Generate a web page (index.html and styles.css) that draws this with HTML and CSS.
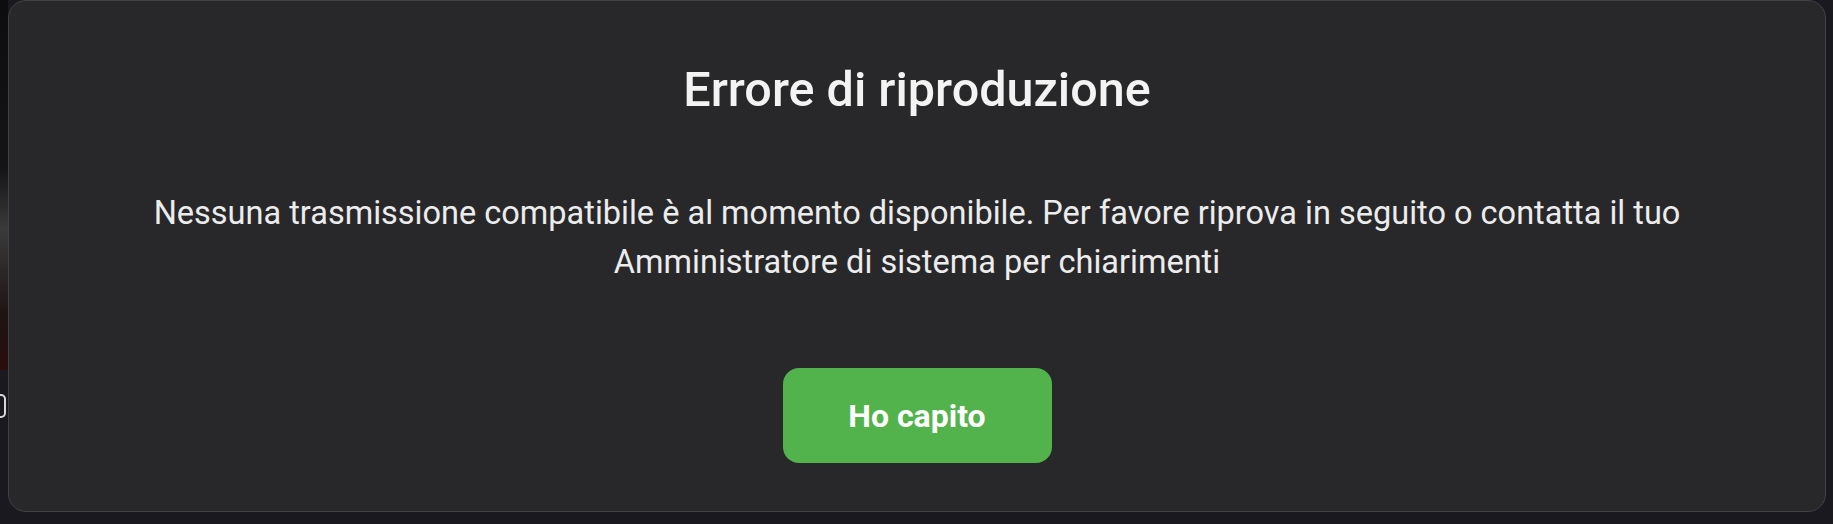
FILE: index.html
```html
<!DOCTYPE html>
<html lang="it">
<head>
  <meta charset="UTF-8" />
  <title>Errore di riproduzione</title>
  <link rel="stylesheet" href="styles.css">
</head>
<body>
  <div class="sfondo">
    <div class="locandina"></div>
    <div class="pulsante-dietro"></div>
  </div>

  <div class="dialogo" role="dialog">
    <h1 class="titolo">Errore di riproduzione</h1>
    <p class="messaggio">
      Nessuna trasmissione compatibile è al momento disponibile. Per favore riprova in seguito o contatta il tuo
      Amministratore di sistema per chiarimenti
    </p>
    <button class="btn-ok" type="button">Ho capito</button>
  </div>
</body>
</html>
```

FILE: styles.css
```css
body {
  font-family: 'Roboto', 'Noto Sans', sans-serif;
  background-color: #1b1920;
  margin: 0;
  height: 524px;
  display: flex;
  align-items: flex-start;
  overflow: hidden;
}

.sfondo {
  width: 8px;
  flex-shrink: 0;
}

.locandina {
  height: 370px;
  background: linear-gradient(180deg, #0d0d0f 0%, #141416 45%, #3a3a3a 62%, #1e1414 85%, #2a0e0e 100%);
}

.pulsante-dietro {
  margin-top: 24px;
  height: 20px;
  border: 2px solid #d8d8d8;
  border-left: none;
  border-radius: 0 5px 5px 0;
  width: 4px;
}

.dialogo {
  box-sizing: border-box;
  width: 1818px;
  height: 512px;
  background-color: #28282a;
  border: 1px solid #434347;
  border-radius: 18px;
  padding: 60px 40px 0;
  display: flex;
  flex-direction: column;
  align-items: center;
  text-align: center;
}

.titolo {
  margin: 0;
  font-size: 48.5px;
  line-height: 1.2;
  font-weight: 500;
  color: #f3f3f3;
}

.messaggio {
  margin: 70px 0 0;
  max-width: 1600px;
  font-size: 32.5px;
  line-height: 48.5px;
  color: #ececec;
}

.btn-ok {
  margin-top: 82px;
  width: 269px;
  height: 95px;
  border: none;
  border-radius: 16px;
  background-color: #52b34c;
  color: #ffffff;
  font-family: 'Roboto', sans-serif;
  font-size: 32px;
  font-weight: 700;
  cursor: pointer;
}
```
